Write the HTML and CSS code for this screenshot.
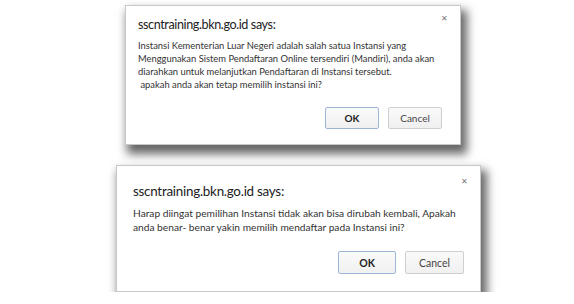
FILE: index.html
```html
<!DOCTYPE html>
<html lang="id">
<head>
    <meta charset="UTF-8">
    <title>Konfirmasi Instansi</title>
    <link rel="stylesheet" href="styles.css">
</head>
<body>
    <!-- first confirm -->
    <div class="dialog dialog-first">
        <div class="dialog-header">
            <div class="dialog-title">sscntraining.bkn.go.id says:</div>
            <span class="dialog-close">&#x2715;</span>
        </div>
        <div class="dialog-message">
            Instansi Kementerian Luar Negeri adalah salah satua Instansi yang<br>
            Menggunakan Sistem Pendaftaran Online tersendiri (Mandiri), anda akan<br>
            diarahkan untuk melanjutkan Pendaftaran di Instansi tersebut.<br>
            &nbsp;apakah anda akan tetap memilih instansi ini?
        </div>
        <div class="dialog-buttons">
            <button class="btn btn-ok">OK</button>
            <button class="btn btn-cancel">Cancel</button>
        </div>
    </div>

    <!-- second confirm -->
    <div class="dialog dialog-second">
        <div class="dialog-header">
            <div class="dialog-title">sscntraining.bkn.go.id says:</div>
            <span class="dialog-close">&#x2715;</span>
        </div>
        <div class="dialog-message">
            Harap diingat pemilihan Instansi tidak akan bisa dirubah kembali, Apakah<br>
            anda benar- benar yakin memilih mendaftar pada Instansi ini?
        </div>
        <div class="dialog-buttons">
            <button class="btn btn-ok">OK</button>
            <button class="btn btn-cancel">Cancel</button>
        </div>
    </div>
</body>
</html>
```

FILE: styles.css
```css
body {
    margin: 0;
    background-color: #fff;
    font-family: Lato, "Open Sans", sans-serif;
    color: #333;
    display: flex;
    flex-direction: column;
    align-items: flex-start;
}

.dialog {
    background-color: #fff;
    border: 1px solid #c8c8c8;
    box-sizing: border-box;
    box-shadow: 4px 7px 9px 2px rgba(0, 0, 0, 0.6);
    display: flex;
    flex-direction: column;
}

.dialog-first {
    margin: 5px 0 0 125px;
    width: 336px;
    height: 140px;
    padding: 10px 12px 0 12px;
}

.dialog-second {
    margin: 20px 0 0 116px;
    width: 365px;
    height: 127px;
    padding: 16px 12px 0 16px;
}

.dialog-header {
    display: flex;
    justify-content: space-between;
    align-items: flex-start;
}

.dialog-title {
    font-size: 12.6px;
    line-height: 18px;
    color: #222;
    letter-spacing: -0.4px;
}

.dialog-second .dialog-title {
    font-size: 13.4px;
    line-height: 19px;
    letter-spacing: -0.25px;
}

.dialog-close {
    font-size: 8px;
    color: #777;
    margin-top: -3px;
}

.dialog-second .dialog-close {
    margin-top: -6px;
}

.dialog-message {
    font-size: 9.4px;
    line-height: 13px;
    color: #333;
    margin-top: 5px;
    white-space: nowrap;
}

.dialog-second .dialog-message {
    font-size: 10.2px;
    line-height: 14px;
}

.dialog-buttons {
    display: flex;
    justify-content: flex-end;
    gap: 9px;
    margin-top: 16px;
    padding-right: 6px;
}

.dialog-second .dialog-buttons {
    margin-top: 17px;
    padding-right: 4px;
}

.btn {
    font-family: inherit;
    font-size: 10px;
    width: 54px;
    height: 22px;
    padding: 0;
    background: linear-gradient(#fafafa, #f0f0f0);
    border: 1px solid #cfcfcf;
    border-radius: 2px;
    color: #444;
}

.btn-ok {
    font-weight: bold;
    color: #222;
    border-color: #9fb5d6;
}

.dialog-second .btn {
    width: 58px;
    height: 23px;
    font-size: 10.5px;
}

.dialog-second .btn-cancel {
    width: 59px;
}
```
